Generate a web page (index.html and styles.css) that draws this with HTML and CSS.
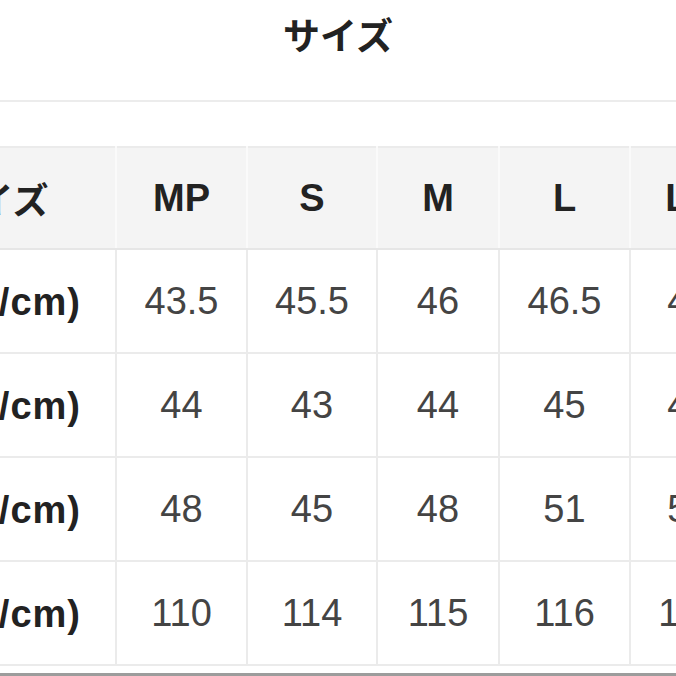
FILE: index.html
```html
<!DOCTYPE html>
<html lang="ja">
<head>
<meta charset="utf-8">
<link rel="stylesheet" href="styles.css">
</head>
<body>
<div class="page">
  <h1 class="title">サイズ</h1>
  <div class="table-wrap">
    <table class="size-table">
      <colgroup>
        <col class="c-label">
        <col class="c-mp">
        <col class="c-s">
        <col class="c-m">
        <col class="c-l">
        <col class="c-ll">
      </colgroup>
      <thead>
        <tr>
          <th>サイズ</th><th>MP</th><th>S</th><th>M</th><th>L</th><th>LL</th>
        </tr>
      </thead>
      <tbody>
        <tr><th class="label">(肩幅/cm)</th><td>43.5</td><td>45.5</td><td>46</td><td>46.5</td><td>47</td></tr>
        <tr><th class="label">(袖丈/cm)</th><td>44</td><td>43</td><td>44</td><td>45</td><td>46</td></tr>
        <tr><th class="label">(身幅/cm)</th><td>48</td><td>45</td><td>48</td><td>51</td><td>54</td></tr>
        <tr><th class="label">(着丈/cm)</th><td>110</td><td>114</td><td>115</td><td>116</td><td>117</td></tr>
      </tbody>
    </table>
  </div>
  <div class="bottom-rule"></div>
</div>
</body>
</html>
```
FILE: styles.css
```css
html, body {
  margin: 0;
  padding: 0;
  background: #ffffff;
}
.page {
  width: 676px;
  height: 676px;
  overflow: hidden;
  font-family: "Liberation Sans", "Noto Sans CJK JP", sans-serif;
}
.title {
  margin: 0;
  height: 100px;
  padding: 0;
  font-family: "Noto Sans CJK JP", sans-serif;
  font-weight: 700;
  font-size: 37px;
  line-height: 68px;
  text-align: center;
  color: #222222;
  border-bottom: 2px solid #ececec;
}
.table-wrap {
  margin-top: 44px;
  width: 676px;
  overflow: hidden;
}
.size-table {
  margin-left: -121px;
  border-collapse: collapse;
  table-layout: fixed;
  width: 881px;
}
.c-label { width: 236px; }
.c-mp { width: 131px; }
.c-s { width: 130px; }
.c-m { width: 122px; }
.c-l { width: 131px; }
.c-ll { width: 131px; }
.size-table th,
.size-table td {
  border: 2px solid #ebebeb;
  text-align: center;
  vertical-align: middle;
  padding: 0;
  white-space: nowrap;
  font-size: 38px;
}
.size-table th:last-child,
.size-table td:last-child {
  padding-right: 14px;
}
.size-table thead th {
  height: 100px;
  background: #f4f4f4;
  color: #222222;
  font-weight: 700;
  border-color: #ebebeb #fafafa #e6e6e6 #fafafa;
}
.size-table thead th:first-child {
  font-family: "Noto Sans CJK JP", sans-serif;
  font-size: 36px;
  padding-right: 6px;
}
.size-table tbody tr {
  height: 104px;
}
.size-table .label {
  font-weight: 700;
  color: #222222;
  font-size: 38px;
  letter-spacing: 1px;
  text-align: right;
  padding-right: 34px;
  padding-bottom: 5px;
}
.size-table td {
  color: #444444;
  font-weight: 400;
}
.bottom-rule {
  margin-top: 7px;
  height: 0;
  border-top: 3px solid #9c9c9c;
}
```
